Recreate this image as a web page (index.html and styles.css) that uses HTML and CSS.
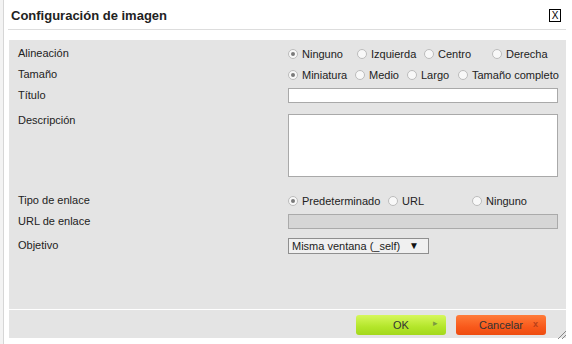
FILE: index.html
```html
<!DOCTYPE html>
<html lang="es">
<head>
    <meta charset="UTF-8">
    <title>Configuración de imagen</title>
    <link rel="stylesheet" href="styles.css">
</head>
<body>
    <div class="backdrop"></div>
    <div class="dialog">
        <div class="dialog-header">
            <h1>Configuración de imagen</h1>
            <span class="close">X</span>
        </div>
        <div class="panel">
            <div class="form">
                <div class="row">
                    <label>Alineación</label>
                    <div class="options">
                        <span class="opt w-70"><span class="radio checked"></span>Ninguno</span>
                        <span class="opt w-67"><span class="radio"></span>Izquierda</span>
                        <span class="opt w-68"><span class="radio"></span>Centro</span>
                        <span class="opt"><span class="radio"></span>Derecha</span>
                    </div>
                </div>
                <div class="row">
                    <label>Tamaño</label>
                    <div class="options">
                        <span class="opt w-67"><span class="radio checked"></span>Miniatura</span>
                        <span class="opt w-52"><span class="radio"></span>Medio</span>
                        <span class="opt w-51"><span class="radio"></span>Largo</span>
                        <span class="opt"><span class="radio"></span>Tamaño completo</span>
                    </div>
                </div>
                <div class="row">
                    <label>Título</label>
                    <input type="text" class="field">
                </div>
                <div class="row row-top">
                    <label>Descripción</label>
                    <textarea class="field area"></textarea>
                </div>
                <div class="row row-link">
                    <label>Tipo de enlace</label>
                    <div class="options">
                        <span class="opt w-100"><span class="radio checked"></span>Predeterminado</span>
                        <span class="opt w-84"><span class="radio"></span>URL</span>
                        <span class="opt"><span class="radio"></span>Ninguno</span>
                    </div>
                </div>
                <div class="row">
                    <label>URL de enlace</label>
                    <input type="text" class="field" disabled>
                </div>
                <div class="row row-target">
                    <label>Objetivo</label>
                    <div class="select">Misma ventana (_self)<span class="caret">▼</span></div>
                </div>
            </div>
            <div class="footer">
                <button class="btn btn-ok">OK<span class="btn-icon">&#9656;</span></button>
                <button class="btn btn-cancel">Cancelar<span class="btn-icon">x</span></button>
            </div>
        </div>
        <div class="grip"></div>
    </div>
</body>
</html>
```

FILE: styles.css
```css
body {
    margin: 0;
    padding: 0;
    width: 572px;
    height: 344px;
    background: #fff;
    font-family: Arial, "Liberation Sans", sans-serif;
    font-size: 11px;
    color: #222;
    position: relative;
    overflow: hidden;
}
.backdrop {
    position: absolute;
    left: 0;
    top: 0;
    width: 3px;
    height: 344px;
    border-right: 1px solid #d6d6d6;
    background: #f3f3f3;
}
.dialog {
    margin-left: 8px;
    width: 559px;
    height: 344px;
    position: relative;
}
.dialog-header {
    display: flex;
    justify-content: space-between;
    align-items: center;
    height: 29px;
    padding: 0 5px 0 3px;
    border-bottom: 1px solid #ddd;
    margin-right: 1px;
}
h1 {
    margin: 0;
    font-size: 13px;
    font-weight: bold;
    color: #222;
    padding-top: 2px;
}
.close {
    display: inline-block;
    width: 10px;
    height: 11px;
    border: 1px solid #000;
    font-size: 10px;
    line-height: 11px;
    text-align: center;
    color: #000;
    margin-top: 2px;
}
.panel {
    margin: 10px 1px 0 1px;
    width: 557px;
    height: 298px;
    background: #e4e4e4;
}
.form {
    height: 266px;
    padding: 3px 9px 0 9px;
}
.row {
    display: grid;
    grid-template-columns: 270px 1fr;
    align-items: center;
    min-height: 21px;
}
.row label {
    line-height: 13px;
}
.row-top {
    align-items: start;
    margin-top: 8px;
}
.row-link {
    margin-top: 13px;
}
.row-target {
    margin-top: 3px;
}
.options {
    display: flex;
    align-items: center;
    white-space: nowrap;
}
.opt {
    display: inline-flex;
    align-items: center;
}
.w-70 { width: 69px; }
.w-67 { width: 67px; }
.w-68 { width: 68px; }
.w-52 { width: 52px; }
.w-51 { width: 51px; }
.w-100 { width: 100px; }
.w-84 { width: 84px; }
.radio {
    display: inline-block;
    width: 8px;
    height: 8px;
    border: 1px solid #bcbcbc;
    border-radius: 50%;
    background: #f8f8f8;
    margin-right: 4px;
    position: relative;
}
.radio.checked::after {
    content: "";
    position: absolute;
    left: 2px;
    top: 2px;
    width: 4px;
    height: 4px;
    border-radius: 50%;
    background: #7a7a7a;
}
.field {
    box-sizing: border-box;
    width: 270px;
    height: 15px;
    margin: 0;
    padding: 0 2px;
    border: 1px solid #a9a9a9;
    background: #fff;
    font-family: Arial, "Liberation Sans", sans-serif;
    font-size: 11px;
}
.field:disabled {
    background: #d6d6d6;
    border-color: #aaa;
}
.area {
    height: 63px;
    resize: none;
}
.select {
    box-sizing: border-box;
    width: 141px;
    height: 16px;
    border: 1px solid #8f8f8f;
    background: #f0f0f0;
    padding: 0 0 0 3px;
    line-height: 14px;
    display: flex;
    justify-content: space-between;
    margin-top: 1px;
}
.caret {
    font-size: 10px;
    padding-right: 9px;
    color: #111;
}
.footer {
    border-top: 1px solid #fff;
    height: 29px;
    display: flex;
    justify-content: flex-end;
    align-items: center;
    gap: 10px;
    padding-right: 20px;
}
.btn {
    position: relative;
    width: 90px;
    height: 20px;
    border: none;
    border-radius: 3px;
    font-family: Arial, "Liberation Sans", sans-serif;
    font-size: 11px;
    color: #333;
    padding: 0;
    cursor: pointer;
}
.btn-ok {
    background: linear-gradient(#d6f75c, #b3e62a 60%, #a3d81c);
}
.btn-cancel {
    background: linear-gradient(#ff7c3a, #f8591b 60%, #ee4c10);
}
.btn-icon {
    position: absolute;
    right: 8px;
    top: 3px;
    font-size: 9px;
}
.btn-ok .btn-icon {
    color: #7a9a40;
}
.btn-cancel .btn-icon {
    color: #b8401a;
    font-weight: bold;
    top: 4px;
}
.grip {
    position: absolute;
    right: 1px;
    bottom: 5px;
    width: 10px;
    height: 10px;
    background: repeating-linear-gradient(135deg, transparent 0 2px, #888 2px 3px);
    clip-path: polygon(100% 0, 100% 100%, 0 100%);
}
```
